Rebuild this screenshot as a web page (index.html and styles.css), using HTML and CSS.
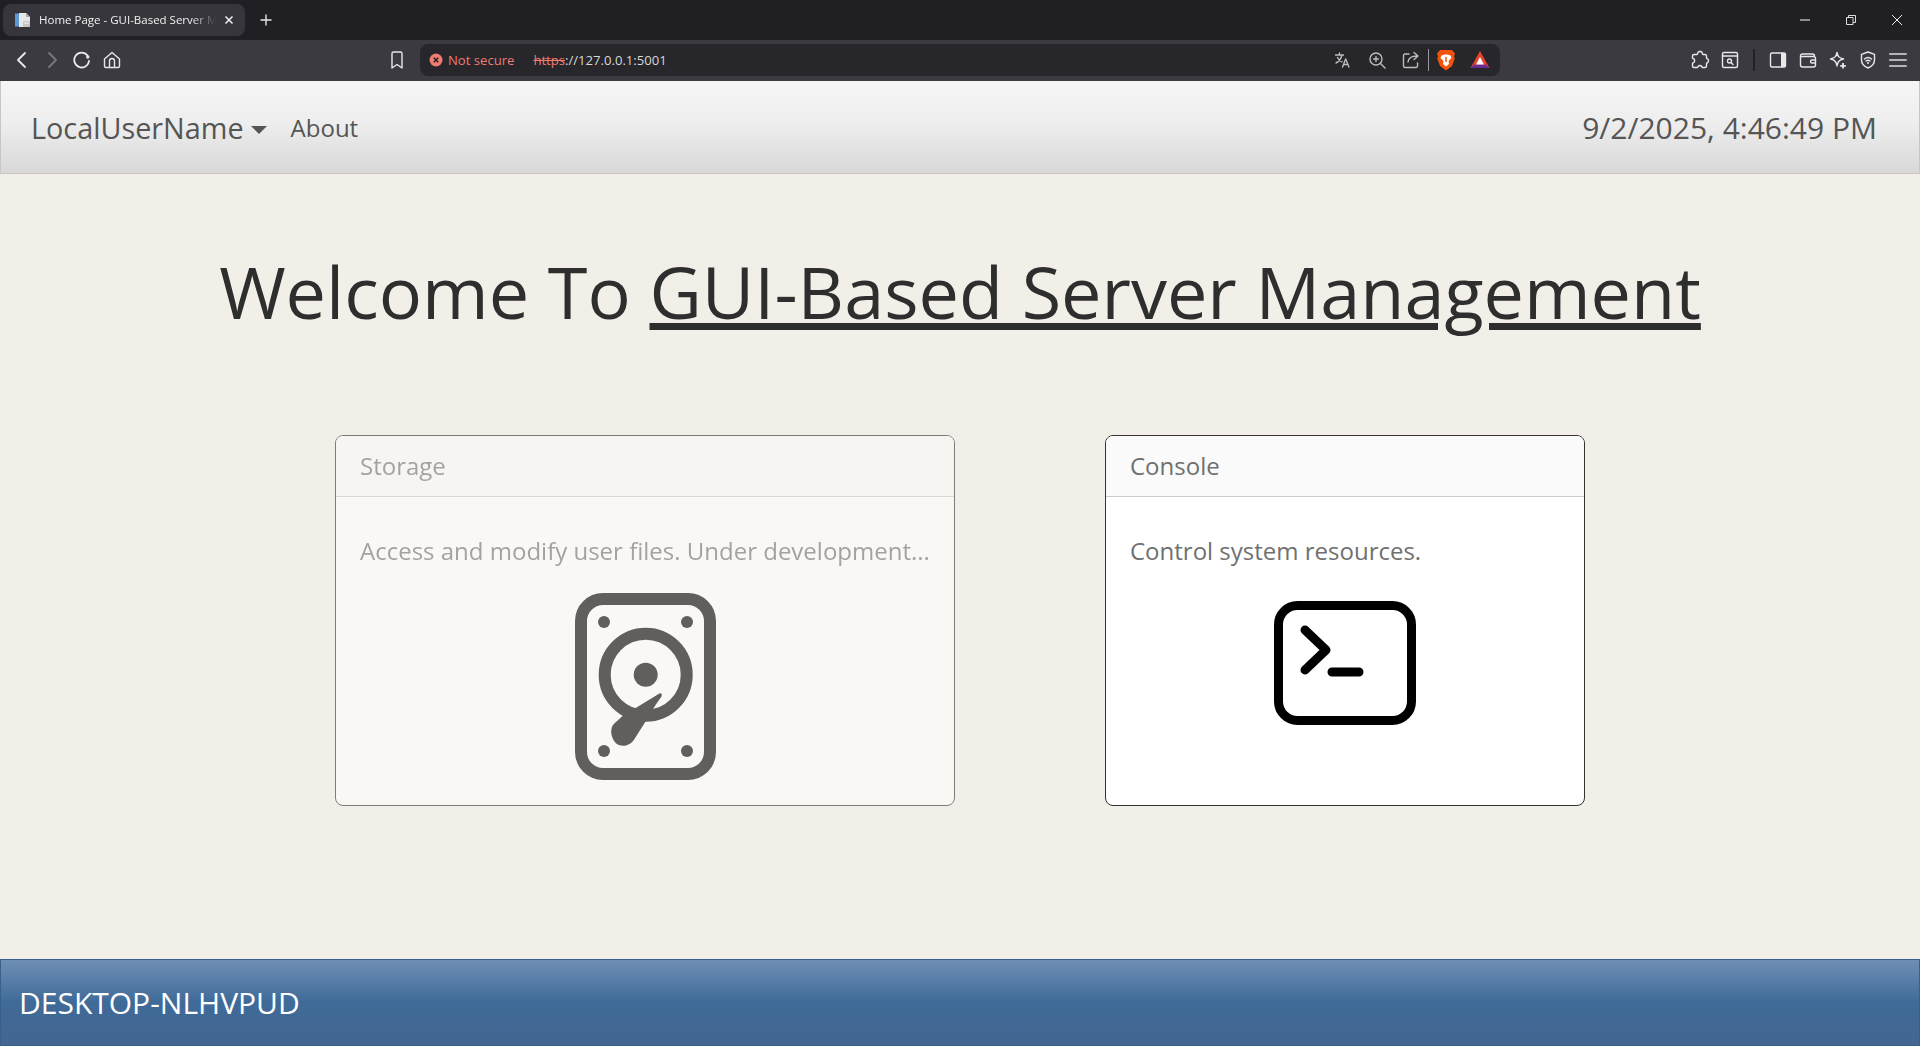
FILE: index.html
```html
<!DOCTYPE html>
<html lang="en">
<head>
    <meta charset="UTF-8">
    <meta name="viewport" content="width=device-width, initial-scale=1.0">
    <title>Home Page - GUI-Based Server Management</title>
    <link rel="stylesheet" href="styles.css">
</head>
<body>
    <!-- Browser tab strip -->
    <div class="tabstrip">
        <div class="tab">
            <svg class="favicon" width="16" height="16" viewBox="0 0 16 16">
                <path d="M0 1.5h4v13H0z" fill="#5b9bd5"/>
                <path d="M4 1h7l4 4v10H4z" fill="#e8e8e8"/>
                <path d="M11 1l4 4h-4z" fill="#a9a9a9"/>
                <path d="M8 9h7v6H8z" fill="#c6c6c6"/>
                <path d="M9 11h5" stroke="#f5f5f5" stroke-width="1"/>
            </svg>
            <span class="tab-title">Home Page - GUI-Based Server Management</span>
            <svg class="tab-close" width="10" height="10" viewBox="0 0 10 10">
                <path d="M1.5 1.5l7 7M8.5 1.5l-7 7" stroke="#f1f1f1" stroke-width="1.5" fill="none"/>
            </svg>
        </div>
        <svg class="new-tab" width="12" height="12" viewBox="0 0 12 12">
            <path d="M6 0.5v11M0.5 6h11" stroke="#e8e8e8" stroke-width="1.4" fill="none"/>
        </svg>
        <div class="window-controls">
            <div class="win-btn">
                <svg width="10" height="10" viewBox="0 0 10 10"><path d="M0 5h10" stroke="#fff" fill="none"/></svg>
            </div>
            <div class="win-btn">
                <svg width="10" height="10" viewBox="0 0 10 10"><path d="M.5 2.5h6.5v7H.5zM2.5 2.5V.5h7v7H7" stroke="#ddd" fill="none"/></svg>
            </div>
            <div class="win-btn">
                <svg width="12" height="12" viewBox="0 0 12 12"><path d="M1 1l10 10M11 1L1 11" stroke="#eee" fill="none"/></svg>
            </div>
        </div>
    </div>

    <!-- Browser toolbar -->
    <div class="toolbar">
        <div class="tool"><svg width="20" height="20" viewBox="0 0 20 20"><path d="M13 3l-7 7 7 7" class="ico"/></svg></div>
        <div class="tool"><svg width="20" height="20" viewBox="0 0 20 20"><path d="M7 3l7 7-7 7" class="ico dim"/></svg></div>
        <div class="tool"><svg width="20" height="20" viewBox="0 0 20 20"><path d="M15.5 5.5A7.4 7.4 0 1 0 17 11" class="ico"/><circle cx="15.8" cy="7" r="1.7" fill="#e8e8e8"/></svg></div>
        <div class="tool"><svg width="20" height="20" viewBox="0 0 20 20"><path d="M2.5 9L10 2.5 17.500 9v7a1.500 1.500 0 0 1-1.500 1.500H4A1.500 1.500 0 0 1 2.500 16zM7.500 17.500V11a2.500 2.500 0 0 1 5 0v6.500" class="ico thin"/></svg></div>

        <div class="tool bookmark"><svg width="20" height="20" viewBox="0 0 20 20"><path d="M5 3.500A1.500 1.500 0 0 1 6.500 2h7A1.500 1.500 0 0 1 15 3.500V18l-5-3.500L5 18z" class="ico thin"/></svg></div>

        <div class="omnibox">
            <svg class="warn" width="14" height="14" viewBox="0 0 14 14">
                <circle cx="7" cy="7" r="6.500" fill="#f07b70"/>
                <path d="M4.800 4.800l4.400 4.400M9.200 4.800l-4.400 4.400" stroke="#26262a" stroke-width="1.600"/>
            </svg>
            <span class="not-secure">Not secure</span>
            <span class="url"><span class="scheme">https</span>://127.0.0.1:5001</span>
            <div class="omni-right">
                <div class="tool small"><svg width="18" height="18" viewBox="0 0 18 18"><path d="M1.500 4h8M5.500 2v2M8 4C7 8 5 10.500 2 12M3.500 6.500C4.500 9 6 10 8 10.800M8.500 16l3.200-8 3.200 8M9.700 13.500h4" class="ico thin gray"/></svg></div>
                <div class="tool small"><svg width="18" height="18" viewBox="0 0 18 18"><circle cx="8" cy="8" r="6" class="ico thin gray"/><path d="M12.500 12.500L17 17M8 5.500v5M5.500 8h5" class="ico thin gray"/></svg></div>
                <div class="tool small"><svg width="18" height="18" viewBox="0 0 18 18"><path d="M7 3H3a1.500 1.500 0 0 0-1.500 1.500V15A1.500 1.500 0 0 0 3 16.500h11a1.500 1.500 0 0 0 1.500-1.500v-3M6 11c.5-4 3-6 9-6M12 1.500L16 5l-4 3.500" class="ico thin gray"/></svg></div>
                <div class="omni-sep"></div>
                <div class="tool small">
                    <svg width="20" height="22" viewBox="0 0 20 22">
                        <path d="M4 1h12l3 3.500-1 3 .8 2L16 17l-6 4.500L4 17 1.200 9.500l.8-2-1-3z" fill="#f1520c"/>
                        <path d="M5.500 6.500L8.500 5.500h3L14.500 6.500 15.500 9l-3 3 .5 3-3 2.500L7 15l.5-3-3-3z" fill="#fff"/>
                        <path d="M10 8v5" stroke="#f1520c" stroke-width="1.500"/>
                    </svg>
                </div>
                <div class="tool small">
                    <svg width="20" height="18" viewBox="0 0 20 18">
                        <path d="M10 0l9.500 17H.5z" fill="#e8432e"/>
                        <path d="M.5 17l4-3.500h11l4 3.500z" fill="#662d91"/>
                        <path d="M10 6l4 7.500H6z" fill="#fff"/>
                    </svg>
                </div>
            </div>
        </div>

        <div class="tool-right">
            <div class="tool"><svg width="20" height="20" viewBox="0 0 20 20"><path d="M8 2.500a2.500 2.500 0 0 1 4.500 1c0 .5 0 1 .5 1h2a1.500 1.500 0 0 1 1.500 1.500v2c0 .5.500.5 1 .8a2.500 2.500 0 0 1 0 4c-.5.300-1 .3-1 .8V16a1.500 1.500 0 0 1-1.500 1.500h-2.500c-.5 0-.5-.5-.8-1a2.200 2.200 0 0 0-3.700 0c-.3.500-.3 1-.8 1H4A1.500 1.500 0 0 1 2.500 16v-2.500c0-.5.500-.5 1-.8a2.300 2.300 0 0 0 0-4c-.5-.2-1-.2-1-.7V6A1.500 1.500 0 0 1 4 4.500h3c.5 0 .7-1.200 1-2z" class="ico thin"/></svg></div>
            <div class="tool"><svg width="20" height="20" viewBox="0 0 20 20"><rect x="2.500" y="2.500" width="15" height="15" rx="1.500" class="ico thin"/><path d="M2.500 6h15" class="ico thin"/><circle cx="9.500" cy="11" r="2" class="ico thin"/><path d="M11 12.500l2 2" class="ico thin"/></svg></div>
            <div class="tool-sep"></div>
            <div class="tool"><svg width="20" height="20" viewBox="0 0 20 20"><path d="M13 3h3a1.500 1.500 0 0 1 1.500 1.500v11A1.500 1.500 0 0 1 16 17h-3z" fill="#e8e8e8"/><rect x="2.500" y="3" width="15" height="14" rx="1.500" class="ico thin"/></svg></div>
            <div class="tool"><svg width="20" height="20" viewBox="0 0 20 20"><path d="M2.500 6A2 2 0 0 1 4.500 4h10a2 2 0 0 1 2 2M2.500 6v9A2 2 0 0 0 4.500 17h11a2 2 0 0 0 2-2V8.500a2 2 0 0 0-2-2H4.500a2 2 0 0 1-2-.5M17.500 10h-3.500a1.500 1.500 0 0 0 0 3h3.500" class="ico thin"/></svg></div>
            <div class="tool"><svg width="20" height="20" viewBox="0 0 20 20"><path d="M9 2.500c.8 4 2 5.500 6.500 6.500-4.500 1-5.700 2.500-6.500 7-.8-4.500-2-6-6.500-7C7 8 8.200 6.500 9 2.500z" class="ico thin"/><path d="M15 13v5.500M12.200 15.800h5.600" stroke="#e8e8e8" stroke-width="1.800" fill="none"/></svg></div>
            <div class="tool"><svg width="20" height="20" viewBox="0 0 20 20"><path d="M10 2l6.500 2.300V10c0 4-3 6.500-6.500 8-3.500-1.500-6.500-4-6.500-8V4.300z" class="ico thin"/><path d="M6.500 9c2-1.700 5-1.700 7 0M8 11c1.200-1 2.800-1 4 0" class="ico thin"/><circle cx="10" cy="13" r="1" fill="#e8e8e8"/></svg></div>
            <div class="tool"><svg width="20" height="20" viewBox="0 0 20 20"><path d="M2 4h16M2 10h16M2 16h16" class="ico thick"/></svg></div>
        </div>
    </div>

    <!-- Page navbar -->
    <nav class="navbar">
        <a class="nav-user">LocalUserName<span class="caret"></span></a>
        <a class="nav-link">About</a>
        <span class="nav-clock">9/2/2025, 4:46:49 PM</span>
    </nav>

    <main class="content">
        <h1 class="title">Welcome To <u>GUI-Based Server Management</u></h1>

        <div class="cards">
            <div class="card card-storage disabled">
                <div class="card-header">Storage</div>
                <div class="card-body">
                    <p class="card-text">Access and modify user files. Under development...</p>
                    <svg class="hdd-icon" width="141" height="187" viewBox="0 0 141 187">
                        <rect x="6" y="6" width="129" height="175" rx="22" fill="none" stroke="#000" stroke-width="12"/>
                        <circle cx="29" cy="29" r="6"/>
                        <circle cx="112" cy="29" r="6"/>
                        <circle cx="29" cy="158" r="6"/>
                        <circle cx="112" cy="158" r="6"/>
                        <circle cx="70.700" cy="81.700" r="41" fill="none" stroke="#000" stroke-width="12"/>
                        <circle cx="70.700" cy="81.700" r="12"/>
                        <path d="M84 100.700L60.700 115 47.300 123.300 39 130.700C35 135 35 143 40.700 150 45 154 54 154 59 146.700L70.700 128.300 80.700 111.700 86.700 103.300C87 100 86 100 84 100.700z"/>
                    </svg>
                </div>
            </div>

            <div class="card card-console">
                <div class="card-header">Console</div>
                <div class="card-body">
                    <p class="card-text">Control system resources.</p>
                    <svg class="term-icon" width="142" height="124" viewBox="0 0 142 124">
                        <rect x="4.500" y="4.500" width="133" height="115" rx="19" fill="none" stroke="#000" stroke-width="9"/>
                        <path d="M31 29l21 20-21 20M58 71h27" fill="none" stroke="#000" stroke-width="9" stroke-linecap="round" stroke-linejoin="round"/>
                    </svg>
                </div>
            </div>
        </div>
    </main>

    <footer class="footer">DESKTOP-NLHVPUD</footer>
</body>
</html>
```

FILE: styles.css
```css
/* Basic styling */
html, body {
    height: 100%;
}
body {
    font-family: "Open Sans", Arial, sans-serif;
    margin: 0;
    padding: 0;
    display: flex;
    flex-direction: column;
    background-color: #f2efe8;
    color: #333;
}

/* Browser frame */
.tabstrip {
    height: 40px;
    display: flex;
    align-items: center;
    background-color: #1f1f24;
    padding-left: 3px;
    flex: none;
}
.tab {
    width: 242px;
    height: 32px;
    box-sizing: border-box;
    padding: 0 11px 0 12px;
    display: flex;
    align-items: center;
    background-color: #36363c;
    border-radius: 8px;
    color: #f1f1f1;
    font-size: 11.5px;
}
.favicon {
    flex: none;
    margin-right: 8px;
}
.tab-title {
    flex: 1;
    padding-bottom: 2px;
    white-space: nowrap;
    overflow: hidden;
    -webkit-mask-image: linear-gradient(to right, #000 86%, transparent 100%);
    mask-image: linear-gradient(to right, #000 86%, transparent 100%);
}
.tab-close {
    flex: none;
    margin-left: 8px;
}
.new-tab {
    margin-left: 15px;
}
.window-controls {
    margin-left: auto;
    display: flex;
}
.win-btn {
    width: 46px;
    height: 40px;
    display: flex;
    align-items: center;
    justify-content: center;
}
.toolbar {
    height: 41px;
    box-sizing: border-box;
    padding: 0 7px 1px;
    display: flex;
    align-items: center;
    background-color: #3a3a40;
    flex: none;
}
.tool {
    width: 30px;
    height: 30px;
    display: flex;
    align-items: center;
    justify-content: center;
    flex: none;
}
.tool.small {
    width: 34px;
}
.ico {
    fill: none;
    stroke: #e8e8e8;
    stroke-width: 1.8;
    stroke-linecap: round;
    stroke-linejoin: round;
}
.ico.dim {
    stroke: #77777c;
}
.ico.thin {
    stroke-width: 1.4;
}
.ico.thick {
    stroke: #b5b5b8;
    stroke-width: 2;
}
.ico.gray {
    stroke: #bdbdc0;
}
.bookmark {
    margin-left: 255px;
    margin-right: 8px;
}
.omnibox {
    width: 1080px;
    height: 32px;
    box-sizing: border-box;
    padding: 0 3px 0 9px;
    display: flex;
    align-items: center;
    background-color: #26262b;
    border-radius: 8px;
    font-size: 13.1px;
    flex: none;
}
.warn {
    flex: none;
}
.not-secure {
    margin-left: 5px;
    color: #f07b70;
}
.url {
    margin-left: 19px;
    color: #d8d8d8;
}
.scheme {
    color: #f07b70;
    text-decoration: line-through;
}
.omni-right {
    margin-left: auto;
    display: flex;
    align-items: center;
}
.omni-sep {
    width: 1px;
    height: 22px;
    background-color: #9a9a9e;
}
.tool-right {
    margin-left: auto;
    display: flex;
    align-items: center;
}
.tool-sep {
    width: 2px;
    height: 22px;
    margin: 0 8px;
    background-color: #222226;
}

/* Page navbar */
.navbar {
    height: 93px;
    box-sizing: border-box;
    padding: 0 42px 0 30px;
    display: flex;
    align-items: center;
    background: linear-gradient(to bottom, #f5f5f5 0%, #eeeeee 45%, #d8d8d8 100%);
    border: 1px solid #c9c6c1;
    border-top: 0;
    color: #555;
    flex: none;
}
.nav-user {
    font-size: 28.8px;
}
.caret {
    display: inline-block;
    margin-left: 7px;
    vertical-align: 5px;
    border-top: 8px solid #555;
    border-left: 8px solid transparent;
    border-right: 8px solid transparent;
}
.nav-link {
    margin-left: 24px;
    font-size: 24px;
}
.nav-clock {
    margin-left: auto;
    font-size: 30px;
}

/* Main content */
.content {
    flex: 1;
    padding-top: 74px;
}
.title {
    margin: 0;
    text-align: center;
    font-size: 72px;
    font-weight: 400;
    line-height: 86px;
    color: #2e2e2e;
}
.cards {
    margin-top: 101px;
    display: flex;
    justify-content: center;
    gap: 150px;
}
.card {
    height: 371px;
    box-sizing: border-box;
    background-color: #fff;
    border: 1px solid #333;
    border-radius: 8px;
    overflow: hidden;
}
.card.disabled {
    opacity: 0.6;
}
.card-storage {
    width: 620px;
}
.card-console {
    width: 480px;
}
.card-header {
    height: 61px;
    box-sizing: border-box;
    padding: 0 24px;
    line-height: 60px;
    font-size: 24px;
    color: #707070;
    background-color: #fafafa;
    border-bottom: 1px solid #ccc;
}
.card-body {
    padding: 36px 24px 0;
    display: flex;
    flex-direction: column;
    align-items: center;
}
.card-text {
    margin: 0;
    align-self: stretch;
    font-size: 24px;
    line-height: 36px;
    color: #707070;
    white-space: nowrap;
}
.hdd-icon {
    margin-top: 24px;
}
.term-icon {
    margin-top: 32px;
}

/* Footer */
.footer {
    height: 87px;
    box-sizing: border-box;
    padding-left: 18px;
    line-height: 85px;
    font-size: 30px;
    color: #fff;
    background: linear-gradient(to bottom, #6f8fb4 0%, #3f6a98 50%, #436690 100%);
    border: 1px solid #3a5f8a;
    flex: none;
}
```
